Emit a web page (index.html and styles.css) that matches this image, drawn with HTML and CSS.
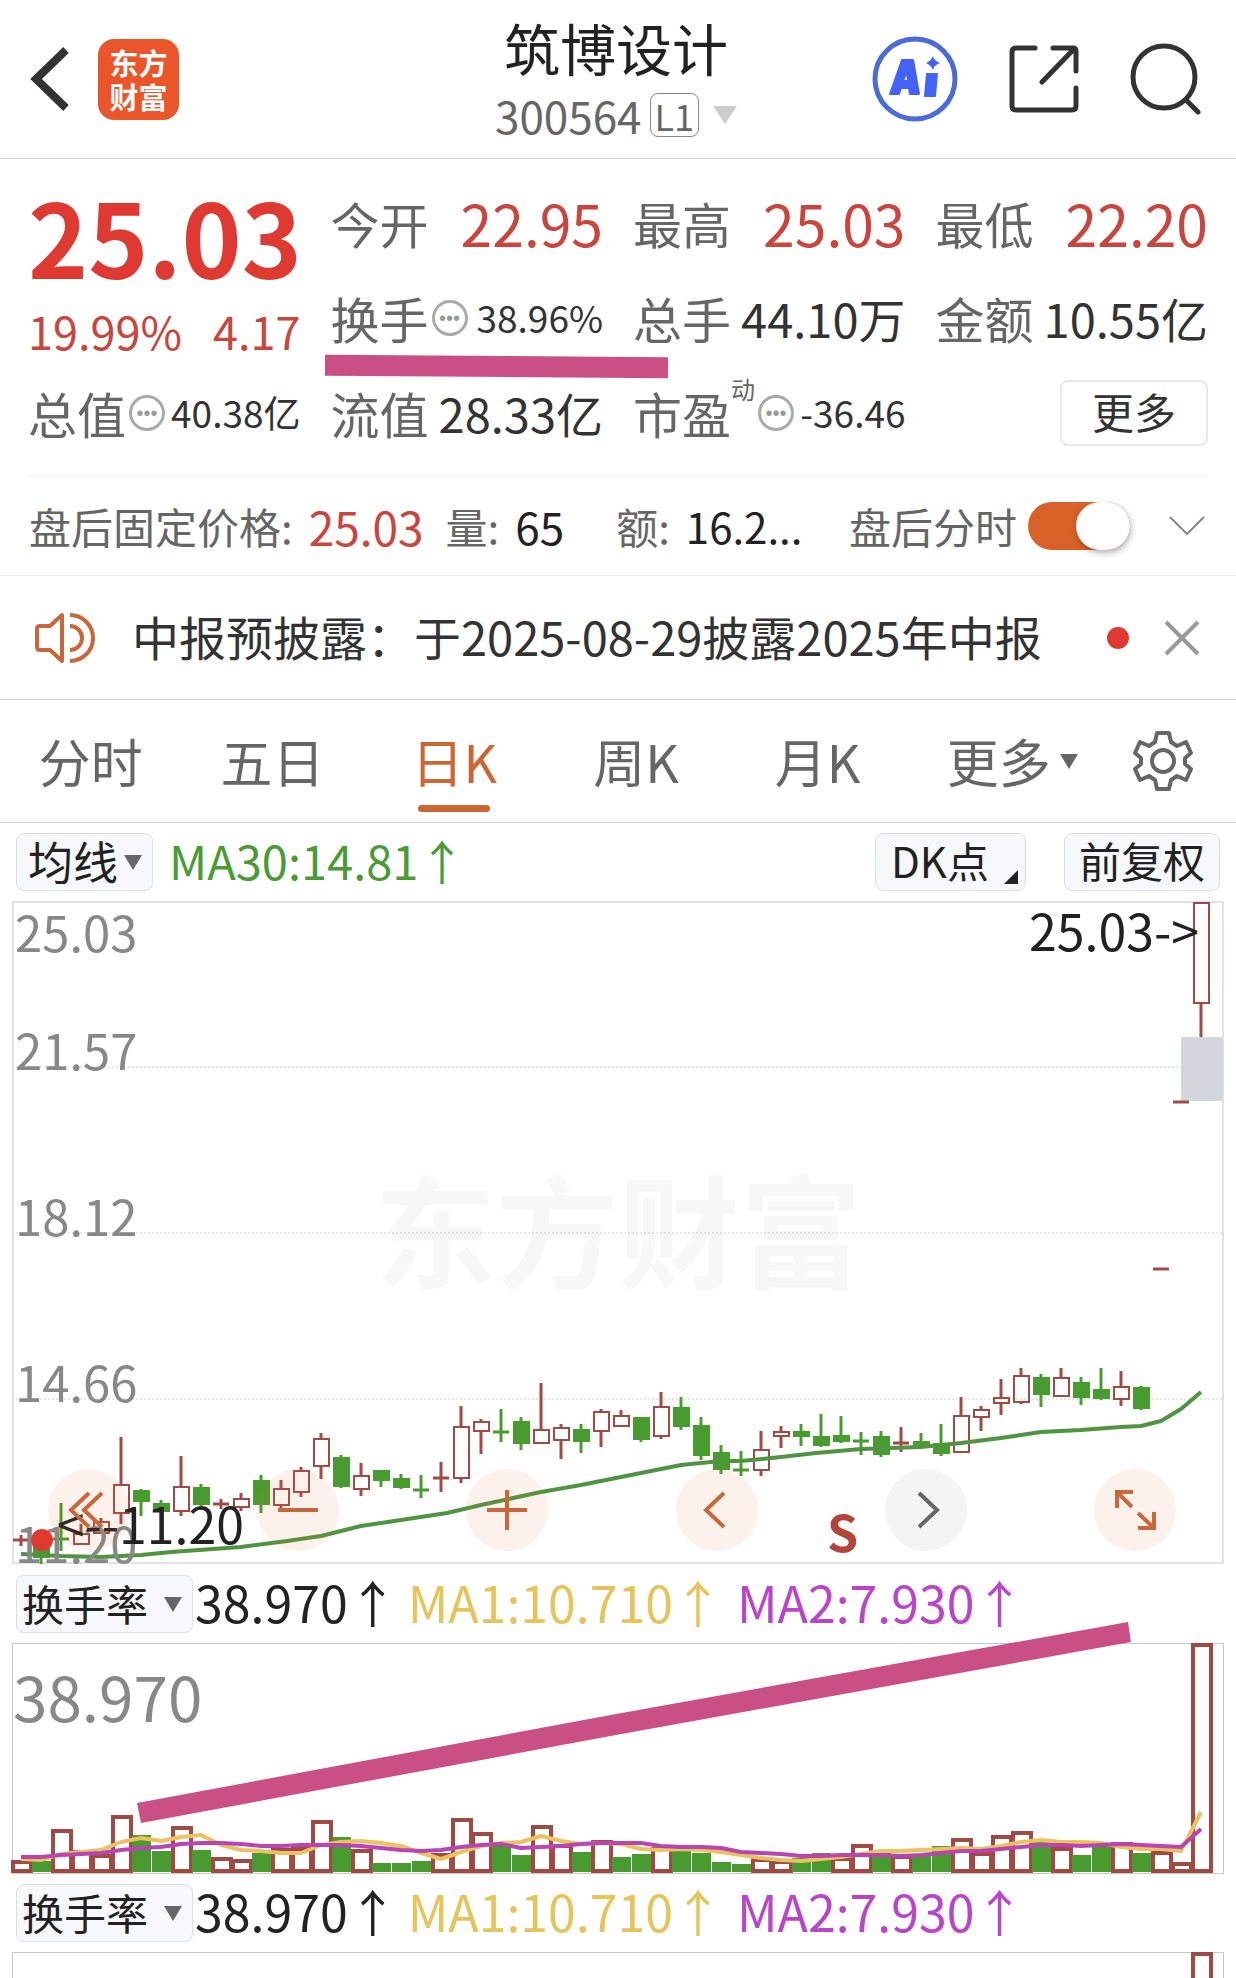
FILE: index.html
```
<!DOCTYPE html>
<html lang="zh-CN">
<head>
  <meta charset="UTF-8">
  <meta name="viewport" content="width=device-width, initial-scale=1.0">
  <title>筑博设计 300564</title>
  <link rel="stylesheet" href="styles.css">
</head>
<body>

  <header class="topbar">
    <div class="topbar-left">
      <button class="icon-btn" aria-label="返回">
        <svg width="40" height="66" viewBox="0 0 40 66"><path d="M36 4 6 33l30 29" fill="none" stroke="#333" stroke-width="8"/></svg>
      </button>
      <a class="logo" href="#"><span>东方</span><span>财富</span></a>
    </div>
    <div class="topbar-title">
      <h1>筑博设计</h1>
      <p class="code">300564<span class="level">L1</span><span class="caret caret-light"></span></p>
    </div>
    <div class="topbar-right">
      <button class="icon-btn" aria-label="AI">
        <svg width="86" height="86" viewBox="0 0 86 86">
          <circle cx="43" cy="43" r="40" fill="none" stroke="#4a6bd8" stroke-width="5"/>
          <path d="M18 58 30 24h11l6 34h-9l-1-6h-8l-2 6zM31 45h5l-1-10zM55 38h10l-2 22H53z" fill="#4263f5" stroke="#4263f5" stroke-width="2" stroke-linejoin="round" fill-rule="evenodd"/>
          <path d="M61 20q1 5 7 7-6 2-7 7-2-5-7-7 5-2 7-7z" fill="#4263f5"/>
        </svg>
      </button>
      <button class="icon-btn" aria-label="分享">
        <svg width="70" height="70" viewBox="0 0 70 70" fill="none" stroke="#333" stroke-width="5" stroke-linecap="round">
          <path d="M26 4H7q-4 0-4 4v54q0 4 4 4h56q4 0 4-4V44M44 4h20q3 0 3 3v20M65 5 33 38"/>
        </svg>
      </button>
      <button class="icon-btn" aria-label="搜索">
        <svg width="72" height="72" viewBox="0 0 72 72" fill="none" stroke="#333" stroke-width="5" stroke-linecap="round">
          <circle cx="34" cy="34" r="31"/><path d="M56 57 68 69"/>
        </svg>
      </button>
    </div>
  </header>

  <section class="quote">
    <div class="price">
      <strong>25.03</strong>
      <p><span>19.99%</span><span>4.17</span></p>
    </div>
    <div class="cell"><span>今开</span><b class="up">22.95</b></div>
    <div class="cell"><span>最高</span><b class="up">25.03</b></div>
    <div class="cell"><span>最低</span><b class="up">22.20</b></div>
    <div class="cell marked"><span>换手</span><i class="dots">•••</i><b class="small">38.96%</b></div>
    <div class="cell"><span>总手</span><b>44.10万</b></div>
    <div class="cell"><span>金额</span><b>10.55亿</b></div>
    <div class="cell"><span>总值</span><i class="dots">•••</i><b class="small">40.38亿</b></div>
    <div class="cell"><span>流值</span><b>28.33亿</b></div>
    <div class="cell"><span>市盈</span><sup>动</sup><i class="dots">•••</i><b class="small">-36.46</b></div>
    <div class="cell"><button class="more-btn">更多</button></div>
  </section>

  <section class="after-hours">
    <span>盘后固定价格:</span><b class="up">25.03</b>
    <span class="vol">量:</span><b>65</b>
    <span class="amount">额:</span><b class="amount-value">16.2...</b>
    <label class="toggle">盘后分时<input type="checkbox" checked></label>
    <button class="icon-btn" aria-label="展开">
      <svg width="38" height="22" viewBox="0 0 38 22"><path d="M2 2l17 17L36 2" fill="none" stroke="#888" stroke-width="2"/></svg>
    </button>
  </section>

  <section class="notice">
    <svg width="62" height="52" viewBox="0 0 62 52" fill="none" stroke="#c8683a" stroke-width="4" stroke-linejoin="round">
      <path d="M28 3v46L16 38H6q-3 0-3-3V17q0-3 3-3h10zM36 3a23 23 0 0 1 0 46M36 14a12 12 0 0 1 0 24"/>
    </svg>
    <a href="#">中报预披露：于2025-08-29披露2025年中报</a>
    <span class="red-dot"></span>
    <button class="icon-btn" aria-label="关闭">
      <svg width="36" height="36" viewBox="0 0 36 36"><path d="M2 2l32 32M34 2 2 34" stroke="#999" stroke-width="4"/></svg>
    </button>
  </section>

  <nav class="tabs">
    <button>分时</button>
    <button>五日</button>
    <button class="active">日K</button>
    <button>周K</button>
    <button>月K</button>
    <button class="with-caret">更多<span class="caret"></span></button>
    <button class="settings" aria-label="设置">
      <svg width="60" height="62" viewBox="0 0 60 62" fill="none" stroke="#666" stroke-width="4" stroke-linejoin="round">
        <path d="M24 3h12l2 9 6 4 9-4 5 11-6 5v6l6 5-5 11-9-4-6 4-2 9H24l-2-9-6-4-9 4-5-11 6-5v-6l-6-5 5-11 9 4 6-4z"/>
        <circle cx="30" cy="31" r="11"/>
      </svg>
    </button>
  </nav>

  <div class="indicator">
    <label class="pick tight"><select aria-label="主图指标"><option>均线</option></select></label>
    <span class="ma30">MA30:14.81↑</span>
    <button class="tag corner">DK点</button>
    <button class="tag">前复权</button>
  </div>

  <div class="chart">
    <svg id="kline" viewBox="0 0 1212 663"></svg>
    <div class="tools">
      <button aria-label="最左"><svg viewBox="0 0 82 82"><path d="M41 24 23 41l18 17M54 24 36 41l18 17"/></svg></button>
      <button aria-label="缩小"><svg viewBox="0 0 82 82"><path d="M21 41h40"/></svg></button>
      <button aria-label="放大"><svg viewBox="0 0 82 82"><path d="M21 41h40M41 21v40"/></svg></button>
      <button aria-label="左移"><svg viewBox="0 0 82 82"><path d="M48 24 30 41l18 17"/></svg></button>
      <button aria-label="右移" class="off"><svg viewBox="0 0 82 82"><path d="M34 24l18 17-18 17"/></svg></button>
      <button aria-label="全屏"><svg viewBox="0 0 82 82"><path d="M23 39V23h16M23 23l15 15M60 43v16H44M60 59 44 44"/></svg></button>
    </div>
  </div>

  <div class="indicator lower">
    <label class="pick"><select aria-label="副图指标一"><option>换手率</option></select></label>
    <span class="now">38.970↑</span><span class="ma1">MA1:10.710↑</span><span class="ma2">MA2:7.930↑</span>
  </div>
  <div class="chart sub">
    <svg id="turnover1" viewBox="0 0 1212 230"></svg>
  </div>

  <div class="indicator lower">
    <label class="pick"><select aria-label="副图指标二"><option>换手率</option></select></label>
    <span class="now">38.970↑</span><span class="ma1">MA1:10.710↑</span><span class="ma2">MA2:7.930↑</span>
  </div>
  <div class="chart sub last">
    <svg id="turnover2" viewBox="0 0 1212 230"></svg>
  </div>

  <script src="chart.js"></script>
</body>
</html>
```
FILE: styles.css
```
* {
  box-sizing: border-box;
}
body {
  display: flex;
  flex-direction: column;
  margin: 0;
  height: 100vh;
  overflow: hidden;
  background: #fff;
  color: #333;
  font-family: "Noto Sans CJK SC", "Noto Sans", sans-serif;
  font-size: 42px;
  line-height: 1;
}
body > * {
  flex: none;
}
h1, p {
  margin: 0;
  font-weight: normal;
}
b, i {
  font-weight: normal;
  font-style: normal;
}
a {
  color: inherit;
  text-decoration: none;
}
button, select {
  font: inherit;
  color: inherit;
  border: none;
  background: none;
  padding: 0;
  margin: 0;
}
svg {
  display: block;
}
.icon-btn {
  flex: none;
}
.up {
  color: #c9453d;
}
.caret {
  flex: none;
  border: 9px solid transparent;
  border-top: 15px solid #666;
  border-bottom: 0;
}
.caret-light {
  border-width: 18px 12px 0;
  border-top-color: #ccc;
}

/* header */
.topbar {
  display: grid;
  grid-template-columns: 1fr auto 1fr;
  align-items: center;
  height: 159px;
  padding: 0 34px 0 30px;
  border-bottom: 1px solid #d4d4d4;
}
.topbar-left, .topbar-right {
  display: flex;
  align-items: center;
}
.topbar-left {
  gap: 28px;
}
.topbar-right {
  justify-content: flex-end;
  gap: 51px;
}
.logo {
  display: flex;
  flex-direction: column;
  align-items: center;
  justify-content: center;
  width: 81px;
  height: 81px;
  border-radius: 16px;
  background: #ea5529;
  color: #fff;
  font-size: 29px;
  font-weight: bold;
  line-height: 34px;
}
.topbar-title {
  padding-top: 8px;
  text-align: center;
}
.topbar-title h1 {
  color: #222;
  font-size: 56px;
  line-height: 64px;
}
.code {
  display: flex;
  align-items: center;
  justify-content: center;
  color: #666;
  font-size: 44px;
  line-height: 72px;
}
.level {
  margin: 0 14px 0 8px;
  padding: 0 4px;
  border: 1px solid #888;
  border-radius: 8px;
  font-size: 36px;
  line-height: 42px;
}

/* quote grid */
.quote {
  display: grid;
  grid-template-columns: repeat(4, minmax(0, 1fr));
  grid-auto-rows: 95px;
  column-gap: 30px;
  margin: 0 28px;
  padding: 18px 0 13px;
  border-bottom: 1px solid #ececec;
}
.price {
  grid-row: span 2;
  padding-top: 6px;
  color: #de3a31;
}
.price strong {
  display: block;
  font-size: 102px;
  line-height: 104px;
}
.price p {
  display: flex;
  justify-content: space-between;
  color: #c9453d;
  font-size: 45px;
  line-height: 88px;
}
.cell {
  display: flex;
  align-items: center;
  justify-content: space-between;
  position: relative;
  padding-bottom: 4px;
  color: #666;
  font-size: 49px;
  white-space: nowrap;
}
.cell b {
  color: #333;
  font-size: 47px;
}
.cell .up {
  color: #c9453d;
  font-size: 57px;
}
.cell .small {
  margin-left: auto;
  font-size: 37px;
}
.cell sup {
  align-self: flex-start;
  margin-top: 10px;
  font-size: 24px;
}
.dots {
  width: 36px;
  height: 36px;
  margin-left: 3px;
  border: 3px solid #aaa;
  border-radius: 50%;
  color: #999;
  font-family: "Liberation Sans", sans-serif;
  font-size: 20px;
  line-height: 30px;
  text-align: center;
}
.marked::after {
  content: "";
  position: absolute;
  top: 84px;
  left: -6px;
  width: 343px;
  height: 21px;
  background: #ca4f84;
  transform: rotate(0.4deg);
  z-index: 1;
}
.more-btn {
  width: 148px;
  height: 66px;
  margin-left: auto;
  padding-bottom: 4px;
  border: 2px solid #e6e8ea;
  border-radius: 8px;
  color: #333;
  font-size: 42px;
}

/* after hours row */
.after-hours {
  display: flex;
  align-items: center;
  height: 100px;
  padding: 0 30px 0 29px;
  border-bottom: 1px solid #ececec;
  color: #666;
  white-space: nowrap;
}
.after-hours b {
  margin-left: 16px;
  color: #222;
  font-size: 44px;
}
.after-hours .up {
  color: #c9453d;
  font-size: 46px;
}
.after-hours .amount-value {
  font-size: 42px;
}
.vol {
  margin-left: 22px;
}
.amount {
  margin-left: 52px;
}
.toggle {
  display: flex;
  align-items: center;
  gap: 11px;
  margin: 0 38px 0 auto;
}
.toggle input {
  appearance: none;
  width: 102px;
  height: 48px;
  margin: 0;
  border-radius: 24px;
  background: #d96128;
}
.toggle input::before {
  content: "";
  display: block;
  width: 54px;
  height: 48px;
  margin-left: auto;
  border-radius: 27px;
  background: #fff;
  box-shadow: 1px 3px 6px rgba(0, 0, 0, 0.3);
}

/* notice */
.notice {
  display: flex;
  align-items: center;
  height: 124px;
  padding: 0 36px 0 34px;
  border-bottom: 1px solid #d4d4d4;
  font-size: 47px;
  white-space: nowrap;
}
.notice a {
  flex: 1;
  margin-left: 36px;
  padding-bottom: 4px;
}
.red-dot {
  width: 22px;
  height: 22px;
  margin-right: 35px;
  border-radius: 50%;
  background: #de3a31;
}

/* period tabs */
.tabs {
  display: flex;
  height: 123px;
  padding-right: 26px;
  border-bottom: 1px solid #d4d4d4;
}
.tabs button {
  display: flex;
  align-items: center;
  justify-content: center;
  flex: 182;
  position: relative;
  color: #666;
  font-size: 52px;
}
.tabs .settings {
  flex: 94;
}
.tabs .with-caret {
  flex: 208;
  gap: 9px;
}
.tabs .active {
  color: #cc6633;
}
.tabs .active::after {
  content: "";
  position: absolute;
  bottom: 10px;
  left: 50%;
  width: 72px;
  height: 7px;
  margin-left: -36px;
  border-radius: 4px;
  background: #cc6633;
}

/* indicator rows */
.indicator {
  display: flex;
  align-items: center;
  height: 78px;
  padding: 0 16px;
  font-size: 47px;
  white-space: nowrap;
}
.indicator.lower {
  height: 79px;
  font-size: 50px;
}
.indicator > span {
  padding-bottom: 6px;
}
.pick, .tag {
  position: relative;
  height: 58px;
  border: 1px solid #dcdfe3;
  border-radius: 8px;
  background: #f6f8fb;
  color: #222;
}
.pick {
  width: 177px;
}
.pick.tight {
  width: 137px;
}
.pick select {
  appearance: none;
  display: block;
  width: 100%;
  height: 54px;
  padding: 0 0 0 5px;
  font-size: 42px;
  line-height: 54px;
}
.pick::after {
  content: "";
  position: absolute;
  top: 21px;
  right: 10px;
  border: 9px solid transparent;
  border-top: 15px solid #666;
  border-bottom: 0;
}
.pick.tight select {
  padding-left: 11px;
  font-size: 45px;
}
.tag {
  padding: 0 14px 4px;
  font-size: 42px;
}
.tag.corner {
  margin: 0 38px 0 auto;
  padding: 0 36px 4px 15px;
}
.corner::after {
  content: "";
  position: absolute;
  right: 7px;
  bottom: 6px;
  border: 7px solid #222;
  border-top-color: transparent;
  border-left-color: transparent;
}
.now {
  margin: 0 10px 0 2px;
  color: #222;
}
.ma30 {
  margin-left: 16px;
  color: #4b9a36;
}
.ma1 {
  margin-right: 14px;
  color: #e6c45c;
}
.ma2 {
  color: #b945c8;
}

/* charts */
.chart {
  position: relative;
  margin: 0 12px;
}
.chart > svg {
  width: 100%;
  height: auto;
  overflow: visible;
}
.chart.last {
  flex: 1 1 0;
  min-height: 0;
  overflow: hidden;
}
.tools {
  display: flex;
  justify-content: space-between;
  position: absolute;
  left: 36px;
  right: 48px;
  bottom: 13px;
}
.tools button {
  width: 82px;
  height: 82px;
  border-radius: 50%;
  background: rgba(230, 120, 60, 0.1);
}
.tools .off {
  background: rgba(60, 60, 60, 0.06);
}
.tools path {
  fill: none;
  stroke: #c8683a;
  stroke-width: 4;
}
.tools .off path {
  stroke: #666;
}
.frame {
  fill: none;
  stroke: #e2e2e2;
  stroke-width: 2;
}
.sub .frame {
  stroke: #c8c8c8;
  stroke-width: 1;
}
.grid {
  stroke: #ccc;
  stroke-dasharray: 2 2;
}
.axis {
  fill: #888;
  font-size: 49px;
}
.axis.big {
  font-size: 62px;
}
.mark {
  fill: #222;
  font-size: 50px;
  text-anchor: end;
}
.watermark {
  fill: #f7f7f7;
  font-size: 122px;
  font-weight: bold;
  text-anchor: middle;
}
.sell {
  fill: #b3443c;
  font-size: 50px;
  font-weight: bold;
}
.red {
  fill: none;
  stroke: #a04a44;
  stroke-width: 2;
}
.green {
  fill: #489b2e;
  stroke: #489b2e;
  stroke-width: 2;
}
line.red, line.green {
  stroke-width: 3;
}
.bar.red {
  stroke-width: 4;
}
.bar.green {
  stroke: none;
}
.line {
  fill: none;
  stroke-width: 4;
  stroke-linejoin: round;
}
.line30 {
  stroke: #4f9440;
}
.line1 {
  stroke: #eac260;
}
.line2 {
  stroke: #b945b4;
}
.stroke {
  fill: #ca4f84;
}
```
FILE: chart.js
```
// [high, body top, body bottom, low, colour], y from the top of the chart
const candles = [
  [634,639,639,645,'r'],[630,634,656,663,'g'],[602,638,638,650,'g'],[623,633,643,643,'r'],[617,621,632,632,'r'],
  [536,584,612,623,'r'],[588,590,600,615,'g'],[599,603,610,612,'g'],[555,586,610,615,'r'],[583,587,603,605,'g'],
  [598,603,603,608,'r'],[592,598,606,610,'r'],[574,580,603,612,'g'],[579,588,604,608,'r'],[566,570,591,596,'r'],
  [532,538,565,578,'r'],[554,557,585,587,'g'],[562,575,588,595,'r'],[570,570,579,586,'g'],[573,578,586,588,'g'],
  [574,589,589,597,'g'],[561,577,577,591,'r'],[505,526,577,582,'r'],[518,521,530,553,'r'],[508,531,531,541,'g'],
  [516,521,542,549,'g'],[482,529,542,542,'r'],[523,527,539,558,'r'],[523,529,540,552,'g'],[508,511,530,546,'r'],
  [509,515,525,525,'r'],[517,517,538,541,'g'],[491,506,535,538,'r'],[496,507,525,529,'g'],[516,525,554,559,'g'],
  [544,552,568,573,'g'],[550,569,569,575,'g'],[530,549,569,575,'r'],[525,531,535,547,'r'],[523,531,535,545,'g'],
  [513,536,544,546,'g'],[515,535,540,542,'g'],[531,540,540,554,'g'],[530,536,553,556,'g'],[526,542,542,551,'r'],
  [532,541,545,546,'g'],[523,543,552,555,'g'],[496,515,551,551,'r'],[505,509,516,530,'r'],[478,497,502,514,'r'],
  [467,475,501,503,'r'],[473,477,493,506,'g'],[467,477,495,495,'r'],[476,482,496,504,'g'],[467,489,497,499,'g'],
  [470,486,498,505,'r'],[485,487,507,509,'g'],[368,368,368,368,'r'],[201,201,201,201,'r'],[2,2,102,136,'r']
];

const ma30 = [[21,653],[61,655],[101,656],[141,654],[171,651],[241,646],[287,640],[321,635],[361,625],[401,619],
  [447,612],[481,604],[541,591],[581,584],[641,572],[681,564],[721,560],[741,560],[781,556],[816,552],[861,548],
  [921,546],[961,542],[1001,537],[1041,531],[1081,529],[1121,526],[1141,525],[1161,520],[1181,508],[1201,491]];

// bar heights, colour follows the sign: red up, green down
const turnover = [13,-12,44,23,19,58,-38,-22,47,-23,16,14,-20,25,26,53,-36,24,-10,-10,-12,20,55,41,-27,-18,48,29,-21,33,
  -16,-19,26,-22,-20,-11,-9,15,13,-15,-20,16,29,-23,18,-18,-27,35,21,38,42,-34,26,-18,-27,31,-20,22,11,230];

const ma1 = [14,13,19,21,23,31,35,32,36,38,28,23,22,20,20,28,31,32,30,27,20,14,21,27,30,31,37,32,29,30,
  29,24,23,24,23,21,18,15,13,12,14,16,19,22,22,23,24,25,24,27,31,33,31,31,30,26,24,24,22,61];
const ma2 = [16,16,18,19,20,23,25,26,29,30,30,29,27,27,28,28,28,27,25,23,22,23,26,28,29,25,26,27,29,30,
  30,30,27,26,26,25,21,20,19,17,17,18,18,18,17,18,20,22,22,24,26,28,28,27,28,29,28,27,26,44];

const STEP = 20;
const FIRST = 9;
const x = i => FIRST + i * STEP;

function drawKline(el) {
  let s = '<text class="watermark" x="606" y="378">东方财富</text>';
  s += '<rect class="frame" x="1" y="1" width="1210" height="661"/>';
  [166, 332, 498].forEach(y => s += `<line class="grid" x1="0" x2="1212" y1="${y}" y2="${y}"/>`);
  s += '<rect x="1169" y="136" width="42" height="64" fill="#d3d7dd"/>';
  candles.forEach(([hi, top, bottom, lo, c], i) => {
    const cls = c === 'r' ? 'red' : 'green';
    const cx = x(i);
    if (hi < top) s += `<line class="${cls}" x1="${cx}" x2="${cx}" y1="${hi}" y2="${top}"/>`;
    if (lo > bottom) s += `<line class="${cls}" x1="${cx}" x2="${cx}" y1="${bottom}" y2="${lo}"/>`;
    if (top === bottom) s += `<line class="${cls}" x1="${cx - 8}" x2="${cx + 8}" y1="${top}" y2="${top}"/>`;
    else s += `<rect class="${cls}" x="${cx - 7}" y="${top}" width="15" height="${bottom - top}"/>`;
  });
  s += `<polyline class="line line30" points="${ma30.map(p => (p[0] - 12) + ',' + p[1]).join(' ')}"/>`;
  [['25.03', 51], ['21.57', 169], ['18.12', 335], ['14.66', 501], ['11.20', 662]].forEach(([t, y]) => {
    s += `<text class="axis" x="3" y="${y}">${t}</text>`;
  });
  s += '<circle cx="30" cy="639" r="11" fill="#e03a30"/>';
  s += '<text class="mark" x="232" y="643">&lt;--11.20</text>';
  s += '<text class="mark" x="1187" y="50">25.03-&gt;</text>';
  s += '<text class="sell" x="815" y="651">S</text>';
  el.innerHTML = s;
}

function drawTurnover(el, main) {
  const base = 230;
  const line = a => a.map((h, i) => x(i) + ',' + (base - h)).join(' ');
  let s = '<rect class="frame" x="0.5" y="0.5" width="1211" height="230"/>';
  if (main) s += '<text class="axis big" x="1" y="79">38.970</text>';
  turnover.forEach((v, i) => {
    const h = Math.abs(v);
    if (v < 0) s += `<rect class="bar green" x="${x(i) - 9}" y="${base - h}" width="19" height="${h - 1}"/>`;
    else s += `<rect class="bar red" x="${x(i) - 8}" y="${base - h + 2}" width="18" height="${h - 4}"/>`;
  });
  s += `<polyline class="line line1" points="${line(ma1)}"/>`;
  s += `<polyline class="line line2" points="${line(ma2)}"/>`;
  if (main) s += '<polygon class="stroke" points="125,160 604,71 1116,-21 1119,-1 604,92 129,180"/>';
  el.innerHTML = s;
}

drawKline(document.getElementById('kline'));
drawTurnover(document.getElementById('turnover1'), true);
drawTurnover(document.getElementById('turnover2'), false);
```
